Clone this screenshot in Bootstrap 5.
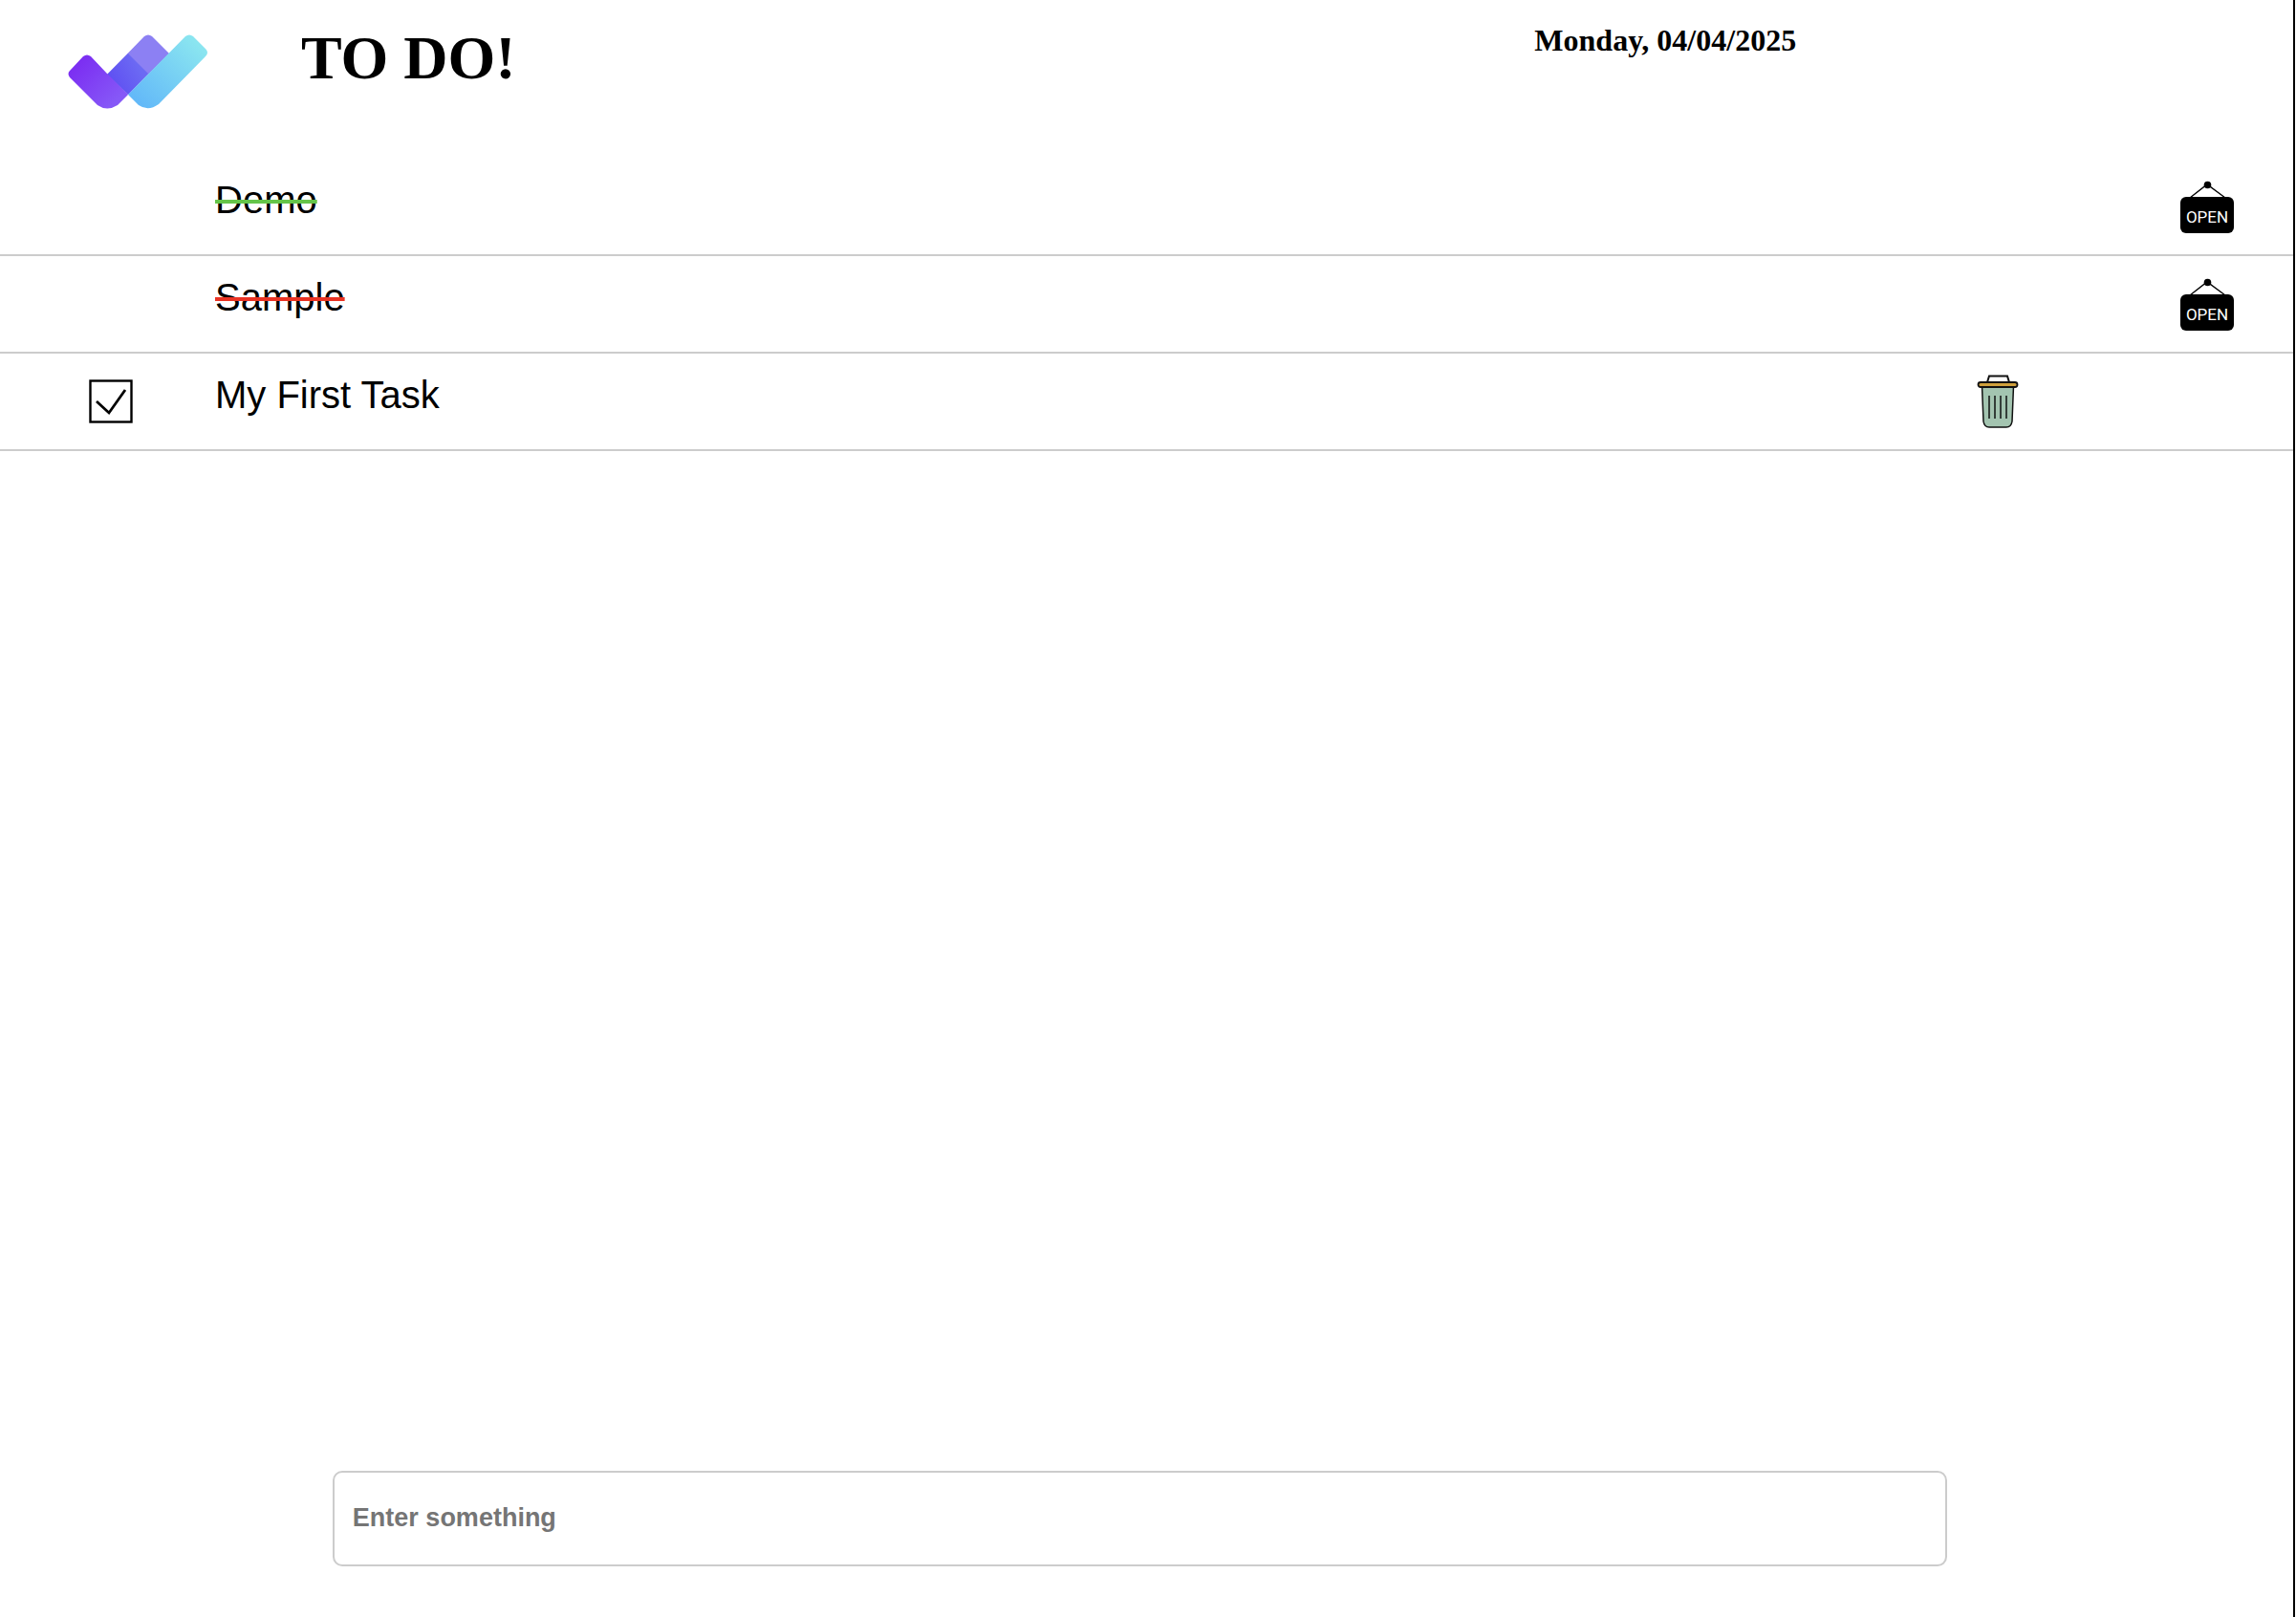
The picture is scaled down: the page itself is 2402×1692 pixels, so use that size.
<!DOCTYPE html>
<html lang="en">
<head>
<meta charset="utf-8">
<meta name="viewport" content="width=device-width, initial-scale=1">
<title>To Do</title>
<link rel="stylesheet" href="https://cdn.jsdelivr.net/npm/bootstrap@5.3.0/dist/css/bootstrap.min.css">
<style>
  body { font-family: "Liberation Sans", Arial, sans-serif; color: #000; background: #fff; }
  .app { border-right: 2px solid #000; margin-right: 1px; }
  .app-header { height: 166px; font-family: "Liberation Serif", "Times New Roman", serif; }
  .brand-cell { width: 315px; padding: 36px 0 0 71px; }
  .app-title { font-size: 64px; line-height: 72px; font-weight: 700; padding-top: 25px; }
  .app-date { font-size: 32px; line-height: 36px; font-weight: 700; padding: 24px 0 0 6px; }
  .task { height: 102px; border-bottom: 2px solid #ccc; }
  .task-check { width: 225px; padding: 27px 0 0 93px; }
  .task-name { font-size: 40px; line-height: 46px; padding-top: 20px; }
  .struck-green { text-decoration: line-through 4px #65c54a; }
  .struck-red { text-decoration: line-through 4px #ea3323; }
  .tick { appearance: none; width: 46px; height: 46px; margin: 0; display: block; border: 0;
    background: url("data:image/svg+xml,%3Csvg xmlns='http://www.w3.org/2000/svg' viewBox='0 0 46 46' fill='none' stroke='%23000'%3E%3Crect x='1.5' y='1.5' width='43' height='43' stroke-width='2.4'/%3E%3Cpath d='M8 23L21 35L38 11' stroke-width='2.800'/%3E%3C/svg%3E") center / contain no-repeat; }
  .icon-btn { background: none; border: 0; padding: 0; display: block; }
  .task-delete { width: 44px; margin: 22px 287px 0 0; }
  .task-open { width: 58px; margin: 22px 61px 0 0; }
  .sign-text { font-family: Roboto, sans-serif; font-size: 17px; fill: #fff; }
  .entry { padding: 0 15.1% 53px 14.5%; }
  .entry-box { height: 100px; width: 100%; border: 2px solid #ccc; border-radius: 10px; padding: 0 19px 1px;
    font-size: 27px; font-weight: 700; color: #000; background: #fff; }
  .entry-box::placeholder { color: #757575; opacity: 1; }
</style>
<script src="https://cdn.jsdelivr.net/npm/bootstrap@5.3.0/dist/js/bootstrap.bundle.min.js"></script>
</head>
<body>
<svg class="d-none" aria-hidden="true">
  <symbol id="open-sign" viewBox="0 0 58 58">
    <path d="M11 19L29 5L48 19" fill="none" stroke="#000" stroke-width="1.400"/>
    <circle cx="29.500" cy="5.500" r="3.800"/>
    <rect x="1" y="18" width="56" height="38" rx="6"/>
    <text x="29" y="45" text-anchor="middle" class="sign-text">OPEN</text>
  </symbol>
</svg>
<div class="app d-flex flex-column min-vh-100">
  <header class="app-header d-flex">
    <div class="col-8 d-flex">
      <div class="brand-cell">
        <svg width="147" height="79" viewBox="0 0 147 79" aria-label="Logo" class="d-block">
          <defs>
            <linearGradient id="g1" gradientUnits="userSpaceOnUse" x1="12" y1="32" x2="50" y2="70"><stop stop-color="#7c30f2"/><stop offset="1" stop-color="#8658f7"/></linearGradient>
            <linearGradient id="g2" gradientUnits="userSpaceOnUse" x1="50" y1="55" x2="78" y2="40"><stop stop-color="#6051f2"/><stop offset="1" stop-color="#6c6af3"/></linearGradient>
            <linearGradient id="g3" gradientUnits="userSpaceOnUse" x1="75" y1="72" x2="135" y2="10"><stop stop-color="#63b9f8"/><stop offset="1" stop-color="#8ae5f0"/></linearGradient>
          </defs>
          <path d="M41 42L80 2Q84-1 88 2L106 20L63 63Z" fill="#8c80f3"/>
          <path d="M41 42L63 20L84 41L63 63Z" fill="url(#g2)"/>
          <path d="M2 38L16 23Q20 20 24 23L41 41L63 63L52 74Q41 81 31 74L2 45Q-1 41 2 38Z" fill="url(#g1)"/>
          <path d="M63 63L123 2Q127-1 131 2L144 15Q148 19 144 23L95 73Q84 81 74 74Z" fill="url(#g3)"/>
        </svg>
      </div>
      <h1 class="app-title m-0">TO DO!</h1>
    </div>
    <div class="col-4"><p class="app-date m-0">Monday, 04/04/2025</p></div>
  </header>

  <main class="flex-grow-1">
    <ul class="list-unstyled m-0">
      <li class="task d-flex align-items-start">
        <div class="task-check"></div>
        <div class="task-name flex-grow-1"><span class="struck-green">Demo</span></div>
        <button type="button" class="icon-btn task-open" aria-label="Reopen Demo"><svg class="d-block" width="58" height="58"><use href="#open-sign"/></svg></button>
      </li>
      <li class="task d-flex align-items-start">
        <div class="task-check"></div>
        <div class="task-name flex-grow-1"><span class="struck-red">Sample</span></div>
        <button type="button" class="icon-btn task-open" aria-label="Reopen Sample"><svg class="d-block" width="58" height="58"><use href="#open-sign"/></svg></button>
      </li>
      <li class="task d-flex align-items-start">
        <div class="task-check"><input class="tick" type="checkbox" id="task3" checked></div>
        <label class="task-name flex-grow-1" for="task3">My First Task</label>
        <button type="button" class="icon-btn task-delete" aria-label="Delete task">
          <svg class="d-block" width="44" height="58" viewBox="0 0 44 58" stroke="#111">
            <path d="M11 8L13 1.500H32L34 8" fill="none" stroke-width="2"/>
            <path d="M5.500 12L7 49Q8 55 13 55H31Q36 55 37 49L38.500 12Z" fill="#a3c4b0" stroke-width="1.500"/>
            <rect x="1.500" y="8" width="41" height="5" rx="2.500" fill="#cfa03c" stroke-width="1.800"/>
            <path d="M13 22V46M19 22V46M25 22V46M31 22V46" stroke-width="1.500"/>
          </svg>
        </button>
      </li>
    </ul>
  </main>

  <form class="entry" onsubmit="return false">
    <input id="newTask" class="entry-box d-block" type="text" placeholder="Enter something" aria-label="New task">
  </form>
</div>
</body>
</html>
